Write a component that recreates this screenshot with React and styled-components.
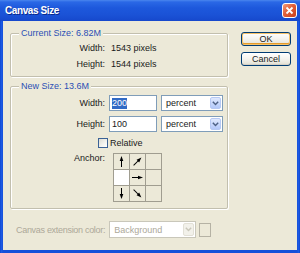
import React from "react";
import styled, { createGlobalStyle } from "styled-components";

const GlobalStyle = createGlobalStyle`
  html, body { margin: 0; padding: 0; background: #fff; }
  body { font-family: "Liberation Sans", Arial, sans-serif; font-size: 9px; color: #1a1a1a; }
  * { box-sizing: border-box; }
`;

const Window = styled.div`
  width: 300px;
  height: 253px;
  display: flex;
  flex-direction: column;
  background: linear-gradient(to right, #0A3FC8 0, #1E5CE6 1px, #1650DA 3px, #1650DA 297px, #1E5CE6 299px, #0A3FC8 300px);
`;

const TitleBar = styled.div`
  height: 21px;
  flex: none;
  display: flex;
  align-items: center;
  justify-content: space-between;
  padding: 0 3px 0 5px;
  background: linear-gradient(to bottom, #4A86EE 0, #2A68E6 2px, #1D58DC 8px, #1A52D6 15px, #1648CC 21px);
`;

const Title = styled.span`
  color: #fff;
  font-weight: bold;
  font-size: 10px;
  letter-spacing: -0.4px;
  text-shadow: 1px 1px 0 #0B2A8E;
`;

const CloseButton = styled.div`
  width: 15px;
  height: 15px;
  border: 1px solid #fff;
  border-radius: 3px;
  background: linear-gradient(135deg, #F09A7A 0%, #E2603A 45%, #C9401C 100%);
  display: flex;
  align-items: center;
  justify-content: center;
`;

const Body = styled.div`
  flex: 1;
  margin: 0 3px 3px;
  background: #ECE9D8;
  display: flex;
  gap: 13px;
  padding: 7px 0 0 7px;
`;

const LeftCol = styled.div`
  width: 218px;
  display: flex;
  flex-direction: column;
`;

const Group = styled.fieldset`
  margin: ${(p) => p.$mt || 0}px 0 0;
  padding: ${(p) => p.$pad};
  border: 1px solid #C2BFAE;
  border-radius: 2px;
  box-shadow: inset 1px 1px 0 #fff, 1px 1px 0 #fff;
  min-width: 0;
`;

const Legend = styled.legend`
  margin-left: 8px;
  padding: 0 2px;
  background: #ECE9D8;
  color: #2B4FB5;
  font-size: 9px;
  line-height: 11px;
`;

const InfoGrid = styled.div`
  display: grid;
  grid-template-columns: 94px auto;
  column-gap: 6px;
  grid-auto-rows: 16px;
  align-items: center;
`;

const FormGrid = styled.div`
  display: grid;
  grid-template-columns: 94px 48px 62px;
  column-gap: 4px;
  row-gap: 5px;
  align-items: center;
`;

const Label = styled.span`
  justify-self: end;
  align-self: ${(p) => (p.$top ? "start" : "center")};
  line-height: 11px;
  color: ${(p) => (p.$disabled ? "#ACA899" : "#1a1a1a")};
`;

const TextInput = styled.div`
  height: 16px;
  border: 1px solid #7F9DB9;
  background: #fff;
  padding-left: 2px;
  display: flex;
  align-items: center;
`;

const Selected = styled.span`
  background: #316AC5;
  color: #fff;
  line-height: 11px;
`;

const Select = styled.div`
  height: ${(p) => (p.$h ? p.$h : 16)}px;
  width: ${(p) => (p.$w ? `${p.$w}px` : "auto")};
  border: 1px solid ${(p) => (p.$disabled ? "#C9C7BA" : "#7F9DB9")};
  background: #fff;
  padding: 1px;
  display: flex;
  align-items: stretch;
`;

const SelectValue = styled.span`
  flex: 1;
  padding-left: 3px;
  display: flex;
  align-items: center;
  color: ${(p) => (p.$disabled ? "#ACA899" : "#1a1a1a")};
`;

const SelectArrow = styled.span`
  width: 11px;
  border-radius: 2px;
  border: 1px solid ${(p) => (p.$disabled ? "#E2E0D6" : "#B6C9F4")};
  background: ${(p) =>
    p.$disabled
      ? "#F2F1EA"
      : "linear-gradient(to bottom, #E0E9FE 0%, #C5D6FC 60%, #B3C8FA 100%)"};
  display: flex;
  align-items: center;
  justify-content: center;
`;

const CheckRow = styled.label`
  grid-column: 1 / -1;
  height: 11px;
  padding-left: 87px;
  display: flex;
  align-items: center;
  gap: 2px;
`;

const CheckBox = styled.span`
  width: 10px;
  height: 10px;
  border: 1px solid #3B6296;
  background: linear-gradient(135deg, #DCDBD3 0%, #F4F4F0 60%, #fff 100%);
`;

const AnchorGrid = styled.div`
  grid-column: 2 / span 2;
  margin-left: 4px;
  width: fit-content;
  display: grid;
  grid-template-columns: repeat(3, 15px);
  grid-auto-rows: 15px;
  gap: 1px;
  padding: 1px;
  background: #A09D90;
`;

const Cell = styled.div`
  background: ${(p) => (p.$active ? "#fff" : "#ECE9D8")};
  display: flex;
  align-items: center;
  justify-content: center;
`;

const ExtRow = styled.div`
  margin-top: 12px;
  height: 17px;
  display: flex;
  align-items: center;
  padding-left: 6px;
`;

const ExtLabel = styled.span`
  color: #ACA899;
  letter-spacing: -0.3px;
  margin-right: 4px;
`;

const Swatch = styled.div`
  width: 12px;
  height: 14px;
  margin-left: 3px;
  border: 1px solid #B5B2A4;
  background: #ECE9D8;
`;

const ButtonCol = styled.div`
  display: flex;
  flex-direction: column;
  gap: 6px;
  padding-top: 4px;
`;

const Button = styled.div`
  width: 50px;
  height: 14px;
  border: 1px solid #003C74;
  border-radius: 3px;
  background: linear-gradient(to bottom, #FFFFFF 0%, #F4F3EE 50%, #E8E6DC 85%, #D8D3C6 100%);
  box-shadow: ${(p) => (p.$default ? "inset 0 0 0 1px #F6C26A, inset 0 -1px 0 1px #E59B2A" : "inset 0 -1px 0 #D6D0C5")};
  display: flex;
  align-items: center;
  justify-content: center;
  font-size: 9px;
  color: #1a1a1a;
`;

const Chevron = ({ color }) => (
  <svg width="7" height="5" viewBox="0 0 7 5">
    <path d="M0.8 0.8 L3.5 3.6 L6.2 0.8" fill="none" stroke={color} strokeWidth="1.4" />
  </svg>
);

const Arrow = ({ deg }) => (
  <svg width="15" height="15" viewBox="0 0 15 15">
    <g transform={`rotate(${deg} 7.5 7.5)`}>
      <line x1="7.5" y1="13" x2="7.5" y2="5" stroke="#000" strokeWidth="1" />
      <polygon points="7.5,2 5.7,7 9.3,7" fill="#000" />
    </g>
  </svg>
);

const anchorCells = [
  { deg: 0 }, { deg: 45 }, null,
  { active: true }, { deg: 90 }, null,
  { deg: 180 }, { deg: 135 }, null,
];

const DropDown = ({ value, disabled, w, h }) => (
  <Select $disabled={disabled} $w={w} $h={h}>
    <SelectValue $disabled={disabled}>{value}</SelectValue>
    <SelectArrow $disabled={disabled}>
      <Chevron color={disabled ? "#C9C7BA" : "#4D6185"} />
    </SelectArrow>
  </Select>
);

export default function App() {
  return (
    <>
      <GlobalStyle />
      <Window>
        <TitleBar>
          <Title>Canvas Size</Title>
          <CloseButton>
            <svg width="9" height="9" viewBox="0 0 9 9">
              <path d="M1.5 1.5 L7.5 7.5 M7.5 1.5 L1.5 7.5" stroke="#fff" strokeWidth="1.8" />
            </svg>
          </CloseButton>
        </TitleBar>
        <Body>
          <LeftCol>
            <Group $pad="1px 0 4px">
              <Legend>Current Size: 6.82M</Legend>
              <InfoGrid>
                <Label>Width:</Label>
                <span>1543 pixels</span>
                <Label>Height:</Label>
                <span>1544 pixels</span>
              </InfoGrid>
            </Group>
            <Group $mt={4} $pad="3px 0 6px">
              <Legend>New Size: 13.6M</Legend>
              <FormGrid>
                <Label>Width:</Label>
                <TextInput>
                  <Selected>200</Selected>
                </TextInput>
                <DropDown value="percent" />
                <Label>Height:</Label>
                <TextInput>100</TextInput>
                <DropDown value="percent" />
                <CheckRow>
                  <CheckBox />
                  <span>Relative</span>
                </CheckRow>
                <Label $top>Anchor:</Label>
                <AnchorGrid>
                  {anchorCells.map((c, i) => (
                    <Cell key={i} $active={c && c.active}>
                      {c && c.deg !== undefined && <Arrow deg={c.deg} />}
                    </Cell>
                  ))}
                </AnchorGrid>
              </FormGrid>
            </Group>
            <ExtRow>
              <ExtLabel>Canvas extension color:</ExtLabel>
              <DropDown value="Background" disabled w={87} h={17} />
              <Swatch />
            </ExtRow>
          </LeftCol>
          <ButtonCol>
            <Button $default>OK</Button>
            <Button>Cancel</Button>
          </ButtonCol>
        </Body>
      </Window>
    </>
  );
}
